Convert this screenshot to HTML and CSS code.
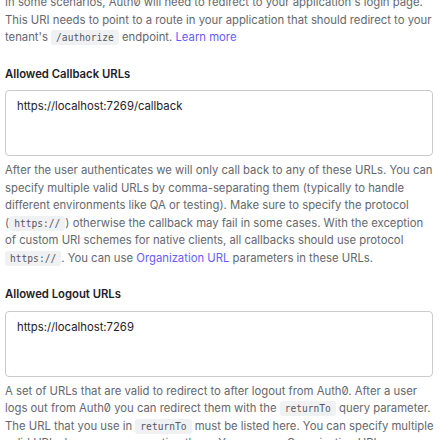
FILE: index.html
```html
<!DOCTYPE html>
<html>
<head>
<meta charset="utf-8">
<link rel="stylesheet" href="styles.css">
</head>
<body>
<div class="page">
  <p class="desc">In some scenarios, Auth0 will need to redirect to your application's login page. This URI needs to point to a route in your application that should redirect to your tenant's <code>/authorize</code> endpoint. <a href="#">Learn more</a></p>

  <div class="field">
    <label class="label">Allowed Callback URLs</label>
    <div class="input">https://localhost:7269/callback</div>
    <p class="desc">After the user authenticates we will only call back to any of these URLs. You can specify multiple valid URLs by comma-separating them (typically to handle different environments like QA or testing). Make sure to specify the protocol (<code>https://</code>) otherwise the callback may fail in some cases. With the exception of custom URI schemes for native clients, all callbacks should use protocol <code>https://</code>. You can use <a href="#">Organization URL</a> parameters in these URLs.</p>
  </div>

  <div class="field">
    <label class="label">Allowed Logout URLs</label>
    <div class="input">https://localhost:7269</div>
    <p class="desc">A set of URLs that are valid to redirect to after logout from Auth0. After a user logs out from Auth0 you can redirect them with the <code>returnTo</code> query parameter. The URL that you use in <code>returnTo</code> must be listed here. You can specify multiple valid URLs by comma-separating them. You can use Organization URL parameters.</p>
  </div>
</div>
</body>
</html>
```
FILE: styles.css
```css
html, body {
  margin: 0;
  padding: 0;
  background: #ffffff;
}
body {
  font-family: Inter, "Noto Sans", sans-serif;
  font-size: 11.3px;
  line-height: 17.5px;
  color: #65676e;
  font-feature-settings: "zero" 1;
}
.page {
  padding: 0 5px 0 5px;
  margin-top: -6px;
}
.desc {
  margin: 0;
}
.desc a {
  color: #635dff;
  text-decoration: none;
}
code {
  font-family: "DejaVu Sans Mono", "Liberation Mono", monospace;
  font-size: 9.6px;
  font-weight: 400;
  background: #f0f1f3;
  color: #55575e;
  padding: 2px 5px;
  border-radius: 3px;
}
.field {
  margin-top: 19px;
}
.label {
  display: block;
  font-weight: 600;
  color: #1e212a;
  margin-bottom: 7px;
}
.input {
  border: 1px solid #c9cace;
  border-radius: 4px;
  height: 48px;
  padding: 7px 11px 9px;
  color: #1e212a;
  margin: 0 2px 6px 0;
}
```
